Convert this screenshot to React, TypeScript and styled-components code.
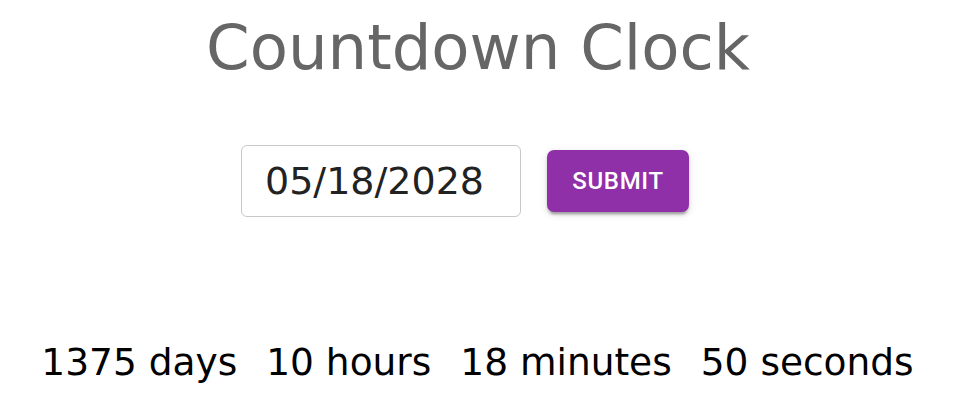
import React from 'react';
import styled, { createGlobalStyle } from 'styled-components';

const GlobalStyle = createGlobalStyle`
  body {
    margin: 0;
    background: #fff;
    font-family: 'DejaVu Sans', sans-serif;
  }
`;

const parts = [
  { value: 1375, unit: 'days' },
  { value: 10, unit: 'hours' },
  { value: 18, unit: 'minutes' },
  { value: 50, unit: 'seconds' },
];

export default function App() {
  return (
    <>
      <GlobalStyle />
      <Page>
        <Title>Countdown Clock</Title>
        <Form onSubmit={(e) => e.preventDefault()}>
          <DateInput type="text" defaultValue="05/18/2028" />
          <SubmitButton type="submit">Submit</SubmitButton>
        </Form>
        <Countdown>
          {parts.map((p) => (
            <Part key={p.unit}>
              {p.value} {p.unit}
            </Part>
          ))}
        </Countdown>
      </Page>
    </>
  );
}

const Page = styled.div`
  display: flex;
  flex-direction: column;
  align-items: center;
  padding-top: 12px;
`;

const Title = styled.h1`
  margin: 0;
  padding-right: 6px;
  font-size: 62.5px;
  font-weight: 400;
  line-height: 72px;
  color: #666;
`;

const Form = styled.form`
  display: flex;
  align-items: center;
  gap: 26px;
  margin-top: 61px;
  padding-right: 32px;
`;

const DateInput = styled.input`
  box-sizing: border-box;
  width: 280px;
  height: 72px;
  padding: 0 0 0 23px;
  border: 1px solid #c8c8c8;
  border-radius: 6px;
  font-family: 'DejaVu Sans', sans-serif;
  font-size: 38px;
  color: #222;
  outline: none;
`;

const SubmitButton = styled.button`
  box-sizing: border-box;
  width: 142px;
  height: 62px;
  border: 0;
  border-radius: 7px;
  background: #9030a8;
  color: #fff;
  font-family: Roboto, sans-serif;
  font-size: 24px;
  font-weight: 500;
  letter-spacing: 0.68px;
  text-transform: uppercase;
  box-shadow: 0 5px 2px -3px rgba(0, 0, 0, 0.2), 0 3px 3px 0 rgba(0, 0, 0, 0.14),
    0 2px 8px 0 rgba(0, 0, 0, 0.12);
  cursor: pointer;
`;

const Countdown = styled.div`
  display: flex;
  gap: 29px;
  margin-top: 123px;
  padding-right: 7px;
  font-size: 37.5px;
  line-height: 44px;
  color: #000;
`;

const Part = styled.span`
  white-space: pre;
`;
